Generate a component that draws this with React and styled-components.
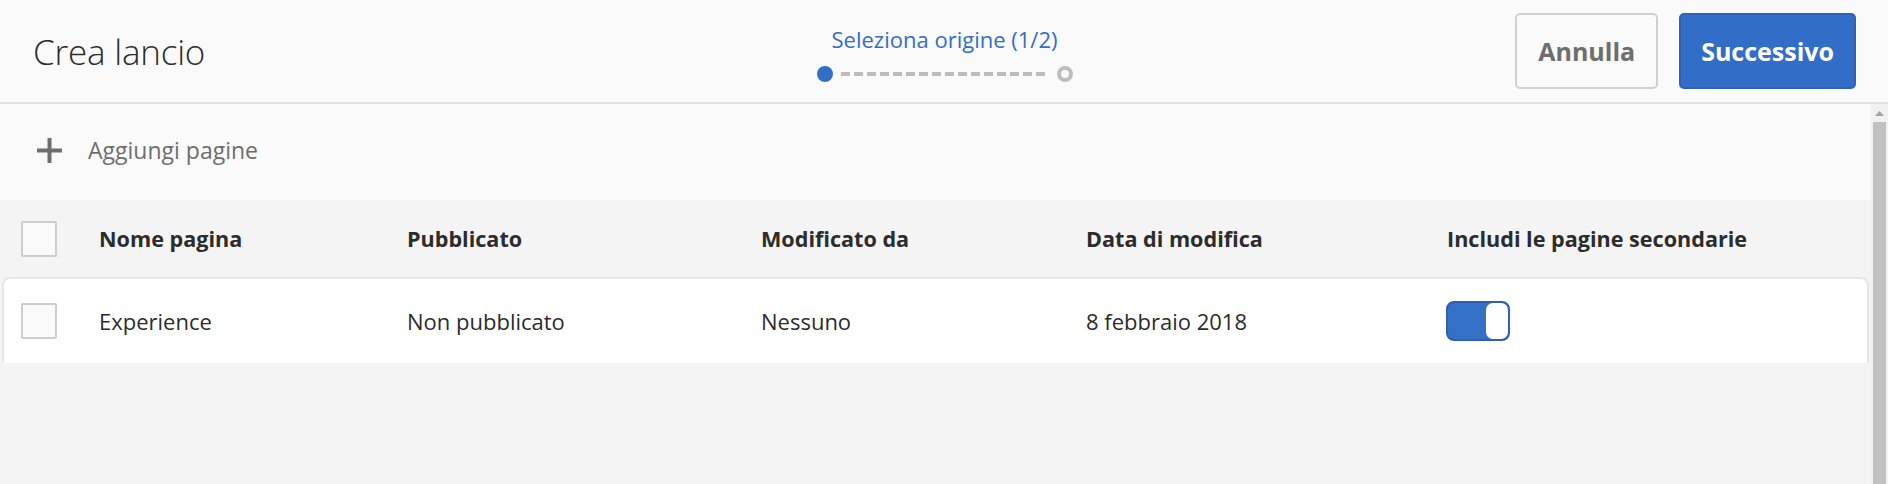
import React from 'react';
import styled, { createGlobalStyle } from 'styled-components';

const GlobalStyle = createGlobalStyle`
  html, body {
    margin: 0;
    padding: 0;
    background: #f4f4f4;
    overflow: hidden;
  }
  body {
    font-family: "Open Sans", "Liberation Sans", sans-serif;
    color: #2c2c2c;
  }
`;

const Page = styled.div`
  width: 1888px;
  height: 484px;
  display: flex;
  flex-direction: column;
`;

const Header = styled.header`
  height: 102px;
  flex: none;
  display: grid;
  grid-template-columns: 1fr auto 1fr;
  align-items: center;
  padding: 0 32px 0 33px;
  background: #fafafa;
  border-bottom: 2px solid #e1e1e1;
`;

const Title = styled.h1`
  margin: 0;
  font-size: 35px;
  font-weight: 300;
  color: #2c2c2c;
  letter-spacing: -0.2px;
`;

const Stepper = styled.div`
  align-self: start;
  margin-top: 26px;
  display: flex;
  flex-direction: column;
  align-items: center;
  gap: 14px;
`;

const StepLabel = styled.div`
  font-size: 22px;
  line-height: 26px;
  color: #326ec8;
`;

const StepTrack = styled.div`
  display: flex;
  align-items: center;
  gap: 8px;
`;

const StepDot = styled.span`
  width: 16px;
  height: 16px;
  box-sizing: border-box;
  border-radius: 50%;
  background: ${p => (p.$active ? '#326ec8' : '#fafafa')};
  border: ${p => (p.$active ? 'none' : '4px solid #bdbdbd')};
`;

const StepLine = styled.span`
  width: 208px;
  height: 4px;
  background: repeating-linear-gradient(
    to right,
    #bdbdbd 0,
    #bdbdbd 9px,
    transparent 9px,
    transparent 13px
  );
`;

const Actions = styled.div`
  justify-self: end;
  display: flex;
  gap: 21px;
`;

const Button = styled.button`
  height: 76px;
  padding: 0 ${p => (p.$primary ? '20px' : '21px')};
  border-radius: 5px;
  font-family: inherit;
  font-size: 25px;
  font-weight: 700;
  cursor: pointer;
  border: 2px solid ${p => (p.$primary ? '#2d63b6' : '#d0d0d0')};
  background: ${p => (p.$primary ? '#326ec8' : '#fafafa')};
  color: ${p => (p.$primary ? '#ffffff' : '#6e6e6e')};
`;

const Body = styled.div`
  flex: 1;
  display: flex;
  min-height: 0;
`;

const Main = styled.main`
  flex: 1;
  display: flex;
  flex-direction: column;
`;

const Toolbar = styled.div`
  height: 96px;
  display: flex;
  align-items: center;
  gap: 26px;
  padding: 0 0 4px 37px;
  box-sizing: border-box;
  background: #fafafa;
  font-size: 23px;
  color: #6e6e6e;
`;

const Row = styled.div`
  display: grid;
  grid-template-columns: ${p => (p.$head ? '97px' : '95px')} 308px 354px 325px 361px 1fr;
  align-items: center;
  margin: 0 2px;
  height: ${p => (p.$head ? '77px' : '86px')};
  box-sizing: border-box;
  background: ${p => (p.$head ? 'transparent' : '#ffffff')};
  border: ${p => (p.$head ? 'none' : '2px solid #e6e6e6')};
  border-bottom: none;
  border-radius: ${p => (p.$head ? '0' : '8px 8px 0 0')};
  font-size: ${p => (p.$head ? '21.6px' : '22px')};
  font-weight: ${p => (p.$head ? 700 : 400)};
  color: #2c2c2c;
`;

const Cell = styled.div`
  white-space: nowrap;
  padding-left: ${p => (p.$check ? (p.$inner ? '17px' : '19px') : '0')};
`;

const Checkbox = styled.span`
  display: block;
  width: 36px;
  height: 36px;
  box-sizing: border-box;
  border: 2px solid #cdcdcd;
  border-radius: 2px;
  background: #fafafa;
`;

const Toggle = styled.span`
  display: flex;
  justify-content: flex-end;
  width: 64px;
  height: 40px;
  margin-left: -1px;
  box-sizing: border-box;
  border: 2px solid #2b62b8;
  border-radius: 8px;
  background: #3470c6;
`;

const Knob = styled.span`
  width: 22px;
  height: 100%;
  border-radius: 7px;
  background: #ffffff;
`;

const Scrollbar = styled.div`
  width: 17px;
  flex: none;
  display: flex;
  flex-direction: column;
  background: #f1f1f1;
`;

const ScrollArrow = styled.div`
  height: 18px;
  display: flex;
  justify-content: center;
  align-items: center;
`;

const Thumb = styled.div`
  flex: 1;
  margin: 0 2px 0 2px;
  background: #c1c1c1;
`;

function PlusIcon() {
  return (
    <svg width="25" height="25" viewBox="0 0 25 25">
      <rect x="10.5" y="0" width="4" height="25" fill="#6e6e6e" />
      <rect x="0" y="10.5" width="25" height="4" fill="#6e6e6e" />
    </svg>
  );
}

const columns = [
  'Nome pagina',
  'Pubblicato',
  'Modificato da',
  'Data di modifica',
  'Includi le pagine secondarie',
];

const pages = [
  {
    name: 'Experience',
    published: 'Non pubblicato',
    modifiedBy: 'Nessuno',
    modified: '8 febbraio 2018',
    children: true,
  },
];

export default function App() {
  return (
    <Page>
      <GlobalStyle />
      <Header>
        <Title>Crea lancio</Title>
        <Stepper>
          <StepLabel>Seleziona origine (1/2)</StepLabel>
          <StepTrack>
            <StepDot $active />
            <StepLine />
            <StepDot />
          </StepTrack>
        </Stepper>
        <Actions>
          <Button>Annulla</Button>
          <Button $primary>Successivo</Button>
        </Actions>
      </Header>
      <Body>
        <Main>
          <Toolbar>
            <PlusIcon />
            <span>Aggiungi pagine</span>
          </Toolbar>
          <Row $head>
            <Cell $check>
              <Checkbox />
            </Cell>
            {columns.map(c => (
              <Cell key={c}>{c}</Cell>
            ))}
          </Row>
          {pages.map(p => (
            <Row key={p.name}>
              <Cell $check $inner>
                <Checkbox />
              </Cell>
              <Cell>{p.name}</Cell>
              <Cell>{p.published}</Cell>
              <Cell>{p.modifiedBy}</Cell>
              <Cell>{p.modified}</Cell>
              <Cell>
                {p.children && (
                  <Toggle>
                    <Knob />
                  </Toggle>
                )}
              </Cell>
            </Row>
          ))}
        </Main>
        <Scrollbar>
          <ScrollArrow>
            <svg width="9" height="5" viewBox="0 0 9 5">
              <path d="M0 5 L4.5 0 L9 5 Z" fill="#a3a3a3" />
            </svg>
          </ScrollArrow>
          <Thumb />
        </Scrollbar>
      </Body>
    </Page>
  );
}
